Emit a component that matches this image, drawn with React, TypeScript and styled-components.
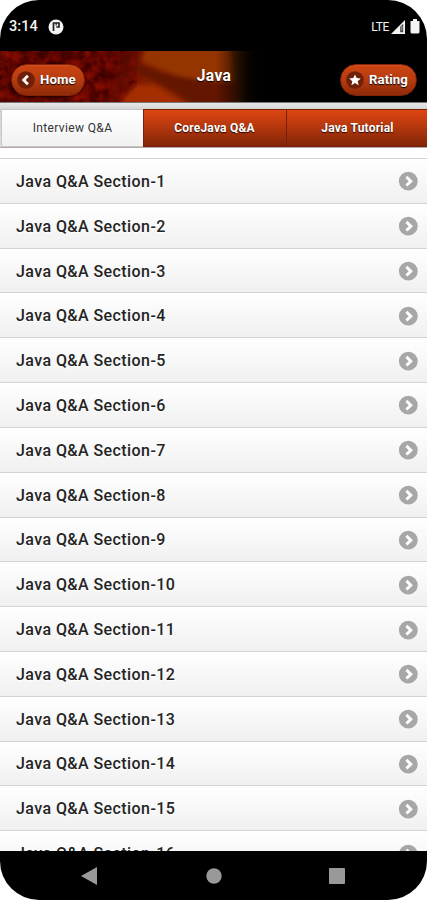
import React from "react";
import styled, { createGlobalStyle } from "styled-components";

const Global = createGlobalStyle`
  * { box-sizing: border-box; }
  body { margin: 0; background: #fff; font-family: Roboto, "Liberation Sans", sans-serif; }
`;

const Phone = styled.main`
  width: 427px;
  height: 900px;
  display: flex;
  flex-direction: column;
  overflow: hidden;
  border-radius: 39px;
  background: #fff;
`;

const StatusBar = styled.header`
  height: 51px;
  flex: none;
  display: flex;
  justify-content: space-between;
  padding: 19px 5px 0 9px;
  background: #000;
  color: #f4f4f4;
`;

const StatusGroup = styled.div<{ $gap: number }>`
  display: flex;
  align-items: center;
  gap: ${(p) => p.$gap}px;
  height: 15px;
`;

const Clock = styled.span`
  font-size: 14.5px;
  font-weight: 500;
  letter-spacing: 0.1px;
`;

const Network = styled.span`
  font-size: 12px;
  letter-spacing: -0.4px;
`;

const Header = styled.div`
  height: 52px;
  flex: none;
  display: grid;
  grid-template-columns: 1fr auto 1fr;
  position: relative;
  padding: 0 10px 0 11px;
  border-bottom: 1px solid #777;
  background: #000;
`;

const HeaderArt = styled.svg`
  position: absolute;
  left: 0;
  top: 0;
`;

const Title = styled.h1`
  position: relative;
  margin: 0;
  padding-top: 16px;
  color: #fff;
  font-size: 15.6px;
  line-height: 18px;
  font-weight: 700;
  letter-spacing: 0.3px;
  text-shadow: 0 1px 1px #000;
`;

const PillButton = styled.button<{ $side: "start" | "end" }>`
  position: relative;
  justify-self: ${(p) => p.$side};
  display: flex;
  align-items: center;
  gap: 5px;
  width: ${(p) => (p.$side === "start" ? 74 : 77)}px;
  height: 32px;
  margin: 13px 0 0;
  padding: 0 0 1px 5px;
  border: 1px solid #84240a;
  border-radius: 16px;
  background: linear-gradient(#cb4513, #b73c10 48%, #8f2a08);
  box-shadow: 0 1px 2px #0009, inset 0 1px 0 #ed652f66;
  color: #fff;
  font: 700 13.2px/16px Roboto, sans-serif;
  letter-spacing: 0.1px;
  text-shadow: 0 1px 1px #000;
`;

const Tabs = styled.nav`
  height: 45px;
  flex: none;
  display: flex;
  padding: 6px 0 0 1px;
  border-bottom: 1px solid #b5a7a4;
  background: linear-gradient(#e8e8e8, #d4d4d4 6px, #ddd);
`;

const Tab = styled.button<{ $active?: boolean }>`
  width: ${(p) => (p.$active ? 142 : 143)}px;
  flex: none;
  height: 38px;
  margin: 0;
  padding: 0 ${(p) => (p.$active ? 0 : 1)}px 1px 0;
  border: solid ${(p) => (p.$active ? "#c7c7c7" : "#75210b")};
  border-width: 1px 0 1px 1px;
  background: ${(p) => (p.$active ? "linear-gradient(#fff, #f1f1f1)" : "linear-gradient(#dd4510, #b9390e 42%, #812407)")};
  color: ${(p) => (p.$active ? "#333" : "#fff")};
  font: ${(p) => (p.$active ? 400 : 700)} 12px/16px Roboto, sans-serif;
  letter-spacing: ${(p) => (p.$active ? 0.36 : 0.22)}px;
  text-shadow: ${(p) => (p.$active ? "0 1px 0 #fff" : "0 1px 1px #250700")};
`;

const List = styled.div`
  flex: 1;
  min-height: 0;
  overflow: hidden;
  padding-top: 10px;
  background: #fff;
`;

const Row = styled.div`
  height: 44.82px;
  display: flex;
  align-items: center;
  justify-content: space-between;
  padding: 1px 9px 0 16px;
  border-top: 1px solid #d3d3d3;
  background: linear-gradient(#fff, #f0f0f0);
  color: #242424;
  font-size: 16px;
  font-weight: 500;
  letter-spacing: 0.42px;
  text-shadow: 0 1px 0 #fff;
`;

const NavBar = styled.footer`
  height: 49px;
  flex: none;
  display: grid;
  grid-template-columns: 178px 72px 174px;
  align-items: center;
  justify-items: center;
  background: #000;
`;

const RowArrow = () => (
  <svg width="20" height="20" viewBox="0 0 20 20">
    <circle cx="10.3" cy="10.2" r="9.4" fill="#a7a7a7" />
    <path d="m8.4 5.9 4.4 4.3-4.4 4.3" fill="none" stroke="#fff" strokeWidth="2.9" />
  </svg>
);

const ButtonIcon = ({ kind }: { kind: "back" | "star" }) => (
  <svg width="18" height="18" viewBox="0 0 18 18">
    <circle cx="9" cy="9" r="8.8" fill="#702009" />
    {kind === "back" ? (
      <path d="M10.9 4.7 6.6 9l4.3 4.3" fill="none" stroke="#fff" strokeWidth="2.7" />
    ) : (
      <path d="m9 3.4 1.7 3.7 4.1.4-3.1 2.7.9 4L9 12.1l-3.6 2.1.9-4-3.1-2.7 4.1-.4Z" fill="#fff" />
    )}
  </svg>
);

const Artwork = () => (
  <HeaderArt width="260" height="51" viewBox="0 0 260 51">
    <defs>
      <linearGradient id="glow">
        <stop stopColor="#480500" />
        <stop offset=".4" stopColor="#5c0500" />
        <stop offset=".56" stopColor="#801d00" />
        <stop offset=".74" stopColor="#8b2b00" />
        <stop offset=".86" stopColor="#7a3000" />
        <stop offset="1" stopColor="#301800" />
      </linearGradient>
      <linearGradient id="edge">
        <stop offset=".83" stopColor="#000" stopOpacity="0" />
        <stop offset=".95" stopColor="#000" stopOpacity=".85" />
        <stop offset="1" stopColor="#000" />
      </linearGradient>
      <filter id="texture" x="0" y="0" width="100%" height="100%" colorInterpolationFilters="sRGB">
        <feTurbulence type="fractalNoise" baseFrequency=".1" numOctaves="3" seed="8" />
        <feColorMatrix values=".75 0 0 0 .01 .14 0 0 0 -.05 0 0 0 0 0 0 0 0 0 .75" />
      </filter>
      <filter id="soft"><feGaussianBlur stdDeviation="2" /></filter>
    </defs>
    <path d="M0 0h260v51H0Z" fill="url(#glow)" />
    <path d="M0 0h137l-4 18-16 33H0Z" filter="url(#texture)" />
    <path d="M126-4h20l-8 18-19 41h-14Z" fill="#620b00" opacity=".6" filter="url(#soft)" />
    <g filter="url(#soft)">
      <path d="M146-3h84l4 36-42-3-51-20Z" fill="#943500" />
      <path d="M136 12q42 18 100 19l-1 27h-38q-35-27-61-36Z" fill="#651200" />
      <path d="m119 53 16-19h20l32 21Z" fill="#a52d00" />
    </g>
    <path d="M0 0h260v51H0Z" fill="url(#edge)" />
  </HeaderArt>
);

const sections = Array.from({ length: 16 }, (_, i) => i + 1);

export default function App() {
  return (
    <>
      <Global />
      <Phone>
        <StatusBar>
          <StatusGroup $gap={10}>
            <Clock>3:14</Clock>
            <svg width="16" height="16" viewBox="0 0 16 16">
              <circle cx="8" cy="8" r="7.5" fill="#f4f4f4" />
              <path d="M5.5 12V4H11v4H8.300" fill="none" stroke="#222" strokeWidth="1.7" />
              <path d="M8.200 4v2.500" stroke="#222" strokeWidth="1.200" />
            </svg>
          </StatusGroup>
          <StatusGroup $gap={2}>
            <Network>LTE</Network>
            <svg width="14" height="14" viewBox="0 0 14 14">
              <path d="M0 14 14 0v14Z" fill="#f4f4f4" />
              <path d="M9.2 6.8 12.2 3.8v8.4h-3Z" fill="#444" />
              <path d="M10.8 6v4.5" stroke="#aaa" />
            </svg>
            <svg width="15" height="15" viewBox="0 0 15 15">
              <path d="M6 0h4v2h2.500v11q0 1.500-1.500 1.500H5Q3.500 14.500 3.500 13V2H6Z" fill="#f4f4f4" />
            </svg>
          </StatusGroup>
        </StatusBar>
        <Header>
          <Artwork />
          <PillButton $side="start"><ButtonIcon kind="back" />Home</PillButton>
          <Title>Java</Title>
          <PillButton $side="end"><ButtonIcon kind="star" />Rating</PillButton>
        </Header>
        <Tabs>
          <Tab $active>Interview Q&amp;A</Tab>
          <Tab>CoreJava Q&amp;A</Tab>
          <Tab>Java Tutorial</Tab>
        </Tabs>
        <List>
          {sections.map((n) => (
            <Row key={n}><span>Java Q&amp;A Section-{n}</span><RowArrow /></Row>
          ))}
        </List>
        <NavBar>
          <svg width="16" height="18" viewBox="0 0 16 18"><path d="M0 9 16 0v18Z" fill="#999" /></svg>
          <svg width="16" height="16" viewBox="0 0 16 16"><circle cx="8" cy="8" r="7.7" fill="#999" /></svg>
          <svg width="16" height="16" viewBox="0 0 16 16"><rect width="16" height="16" rx="1" fill="#999" /></svg>
        </NavBar>
      </Phone>
    </>
  );
}
